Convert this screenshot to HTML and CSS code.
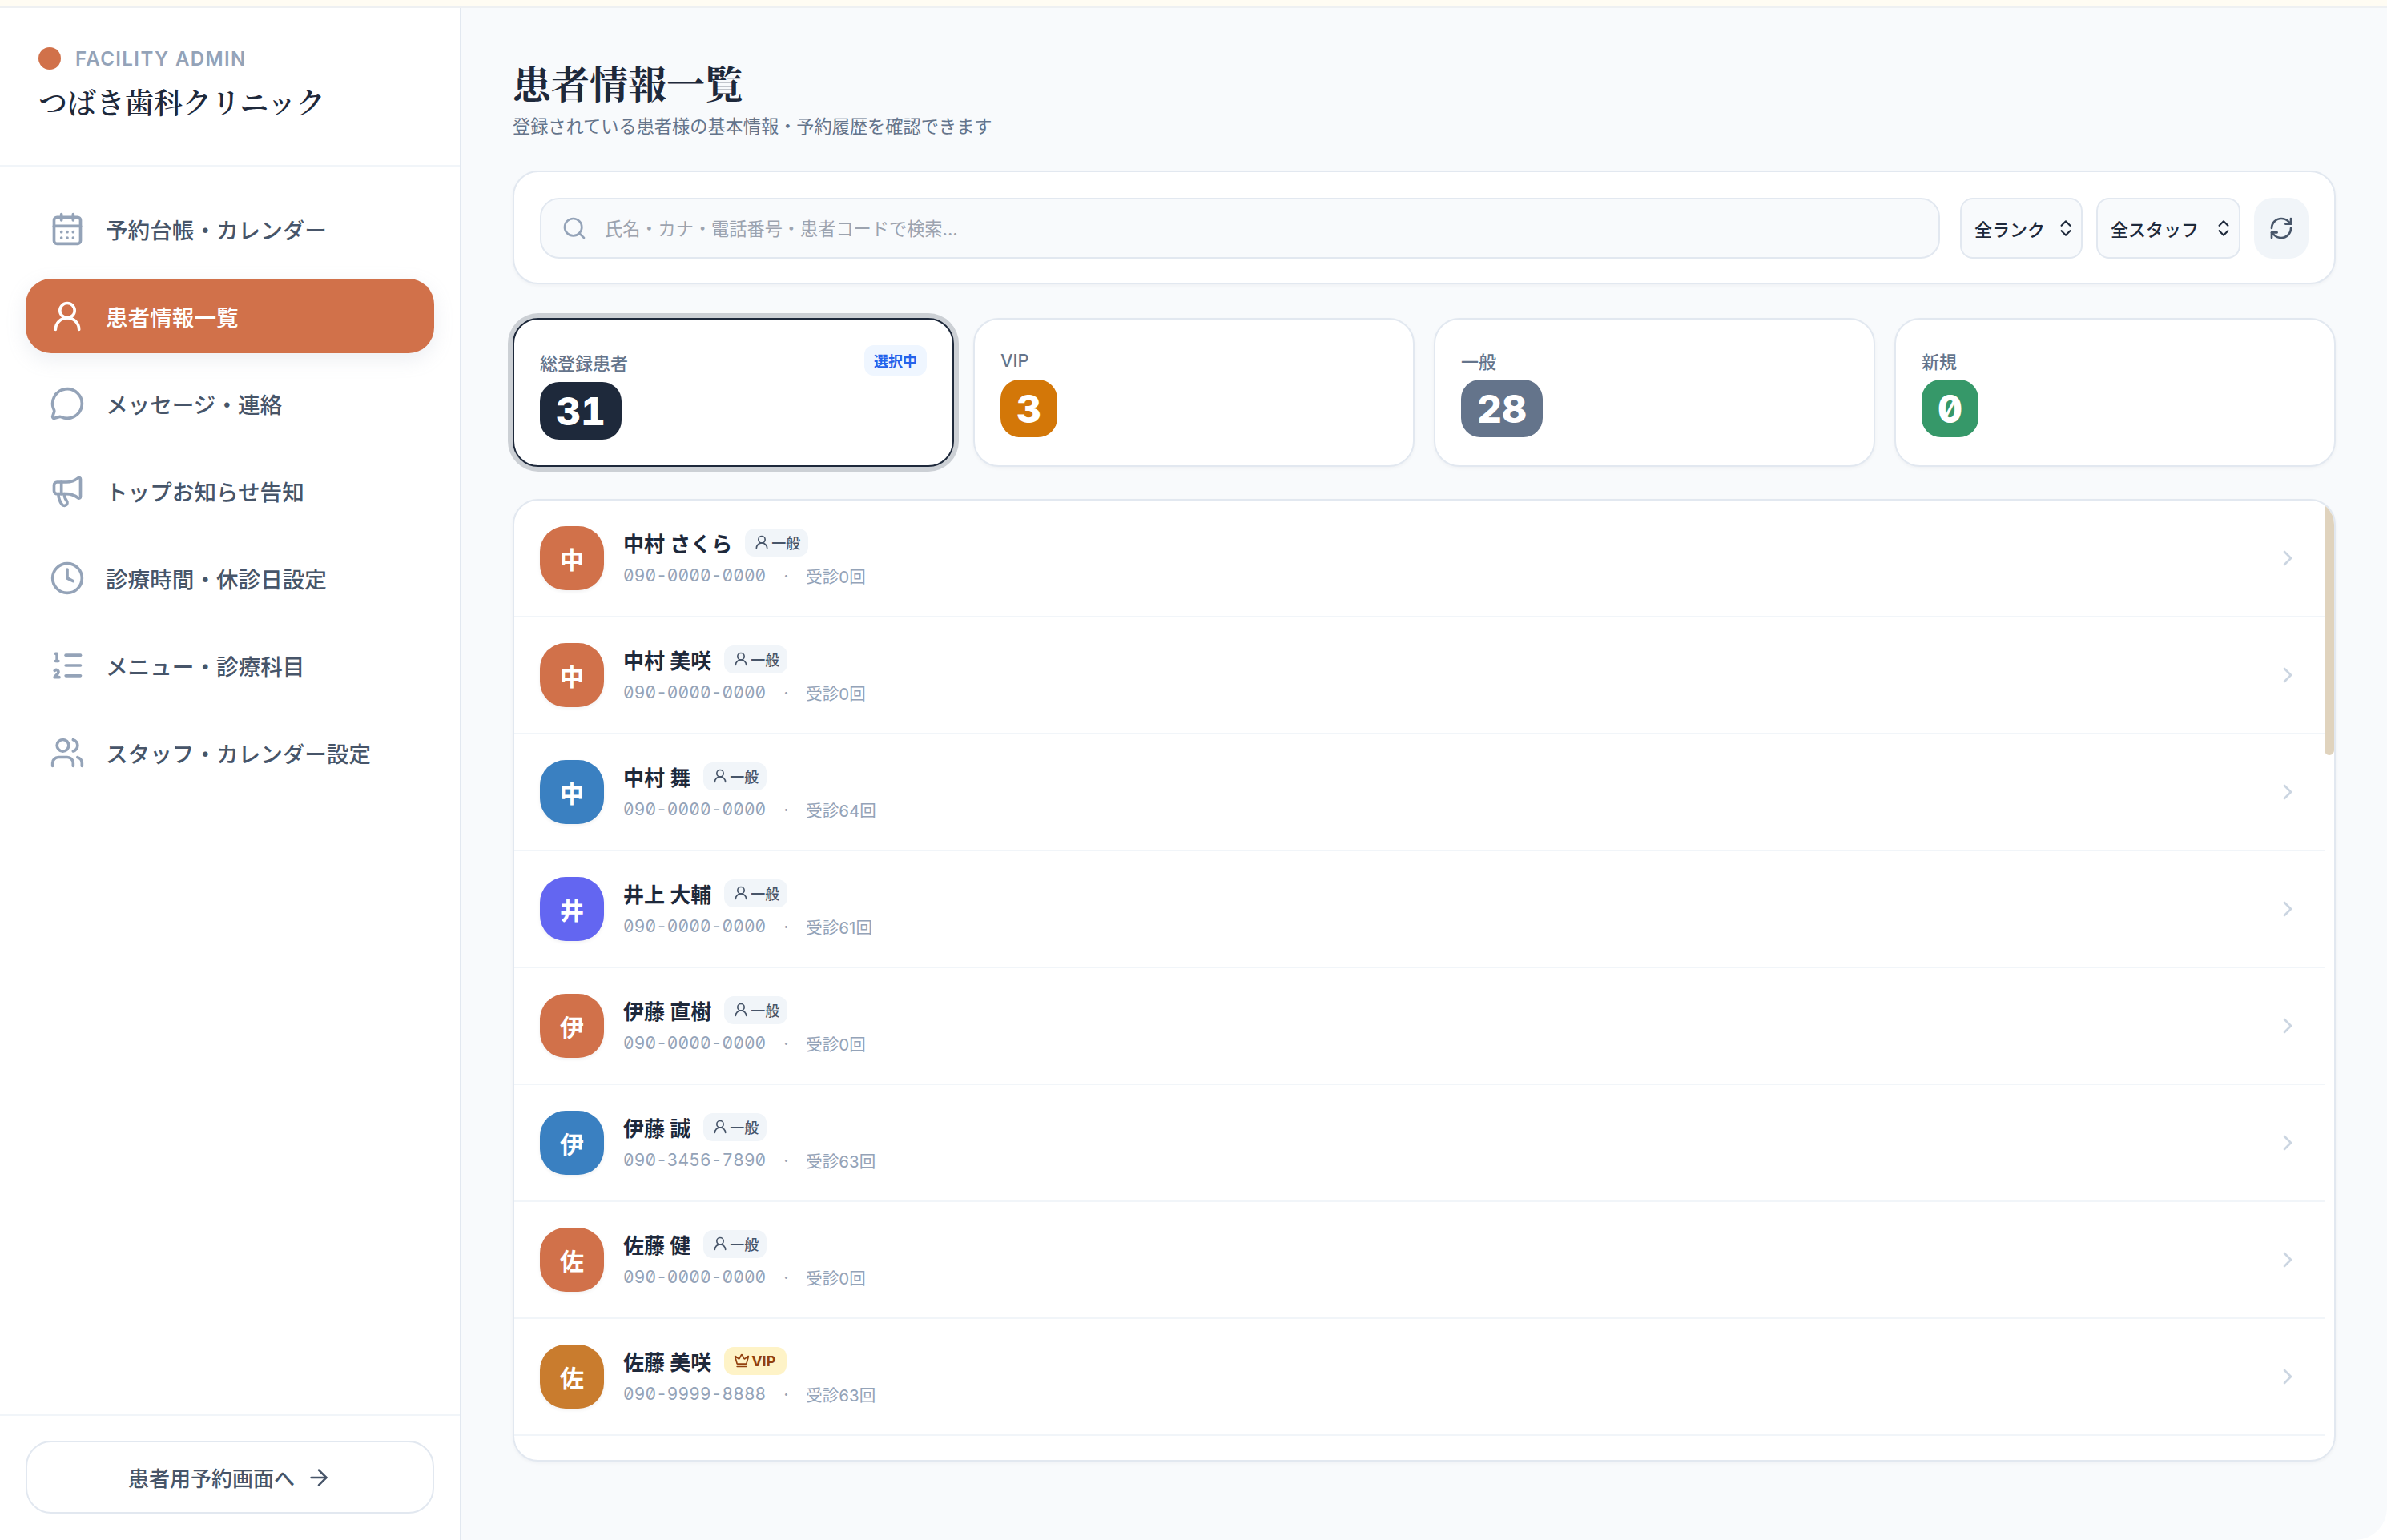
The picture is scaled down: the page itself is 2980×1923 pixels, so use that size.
FILE: index.html
```html
<!DOCTYPE html>
<html lang="ja">
<head>
<meta charset="utf-8">
<title>患者情報一覧</title>
<link rel="stylesheet" href="styles.css">
</head>
<body>
<svg class="sprite" aria-hidden="true">
  <symbol id="i-calendar" viewBox="0 0 24 24"><path d="M8 2v4"/><path d="M16 2v4"/><rect width="18" height="18" x="3" y="4" rx="2"/><path d="M3 10h18"/><path d="M8 14h.01"/><path d="M12 14h.01"/><path d="M16 14h.01"/><path d="M8 18h.01"/><path d="M12 18h.01"/><path d="M16 18h.01"/></symbol>
  <symbol id="i-user" viewBox="0 0 24 24"><circle cx="12" cy="8" r="5"/><path d="M20 21a8 8 0 0 0-16 0"/></symbol>
  <symbol id="i-message" viewBox="0 0 24 24"><path d="M2.992 16.342a2 2 0 0 1 .094 1.167l-1.065 3.29a1 1 0 0 0 1.236 1.168l3.413-.998a2 2 0 0 1 1.099.092 10 10 0 1 0-4.777-4.719"/></symbol>
  <symbol id="i-megaphone" viewBox="0 0 24 24"><path d="M11 6a13 13 0 0 0 8.4-2.8A1 1 0 0 1 21 4v12a1 1 0 0 1-1.6.8A13 13 0 0 0 11 14H5a2 2 0 0 1-2-2V8a2 2 0 0 1 2-2z"/><path d="M6 14a12 12 0 0 0 2.4 7.2 2 2 0 0 0 3.2-2.4A8 8 0 0 1 10 14"/><path d="M8 6v8"/></symbol>
  <symbol id="i-clock" viewBox="0 0 24 24"><circle cx="12" cy="12" r="10"/><path d="M12 6v6l4 2"/></symbol>
  <symbol id="i-list" viewBox="0 0 24 24"><path d="M11 5h10"/><path d="M11 12h10"/><path d="M11 19h10"/><path d="M4 4h1v5"/><path d="M4 9h2"/><path d="M6.5 20H3.4c0-1 2.6-1.925 2.6-3.5a1.5 1.5 0 0 0-2.6-1.02"/></symbol>
  <symbol id="i-users" viewBox="0 0 24 24"><path d="M16 21v-2a4 4 0 0 0-4-4H6a4 4 0 0 0-4 4v2"/><path d="M16 3.128a4 4 0 0 1 0 7.744"/><path d="M22 21v-2a4 4 0 0 0-3-3.87"/><circle cx="9" cy="7" r="4"/></symbol>
  <symbol id="i-arrow" viewBox="0 0 24 24"><path d="M5 12h14"/><path d="m12 5 7 7-7 7"/></symbol>
  <symbol id="i-search" viewBox="0 0 24 24"><circle cx="11" cy="11" r="8"/><path d="m21 21-4.34-4.34"/></symbol>
  <symbol id="i-updown" viewBox="0 0 24 24"><path d="m7 15 5 5 5-5"/><path d="m7 9 5-5 5 5"/></symbol>
  <symbol id="i-refresh" viewBox="0 0 24 24"><path d="M3 12a9 9 0 0 1 9-9 9.75 9.75 0 0 1 6.74 2.74L21 8"/><path d="M21 3v5h-5"/><path d="M21 12a9 9 0 0 1-9 9 9.75 9.75 0 0 1-6.74-2.74L3 16"/><path d="M8 16H3v5"/></symbol>
  <symbol id="i-crown" viewBox="0 0 24 24"><path d="M11.562 3.266a.5.5 0 0 1 .876 0L15.39 8.87a1 1 0 0 0 1.516.294L21.183 5.5a.5.5 0 0 1 .798.519l-2.834 10.246a1 1 0 0 1-.956.734H5.81a1 1 0 0 1-.957-.734L2.02 6.02a.5.5 0 0 1 .798-.519l4.276 3.664a1 1 0 0 0 1.516-.294z"/><path d="M5 21h14"/></symbol>
  <symbol id="i-chevron" viewBox="0 0 24 24"><path d="m9 18 6-6-6-6"/></symbol>
</svg>

<div class="app">
  <div class="topstrip"></div>
  <div class="shell">
    <aside class="sidebar">
      <header class="brand">
        <div class="brand-top"><span class="brand-dot"></span><span class="brand-role">FACILITY ADMIN</span></div>
        <div class="brand-name">つばき歯科クリニック</div>
      </header>
      <nav class="nav">
        <a class="nav-item"><svg class="ico nav-ico"><use href="#i-calendar"/></svg><span>予約台帳・カレンダー</span></a>
        <a class="nav-item active"><svg class="ico nav-ico"><use href="#i-user"/></svg><span>患者情報一覧</span></a>
        <a class="nav-item"><svg class="ico nav-ico"><use href="#i-message"/></svg><span>メッセージ・連絡</span></a>
        <a class="nav-item"><svg class="ico nav-ico"><use href="#i-megaphone"/></svg><span>トップお知らせ告知</span></a>
        <a class="nav-item"><svg class="ico nav-ico"><use href="#i-clock"/></svg><span>診療時間・休診日設定</span></a>
        <a class="nav-item"><svg class="ico nav-ico"><use href="#i-list"/></svg><span>メニュー・診療科目</span></a>
        <a class="nav-item"><svg class="ico nav-ico"><use href="#i-users"/></svg><span>スタッフ・カレンダー設定</span></a>
      </nav>
      <footer class="side-foot">
        <a class="patient-link"><span>患者用予約画面へ</span><svg class="ico arrow-ico"><use href="#i-arrow"/></svg></a>
      </footer>
    </aside>

    <main class="main">
      <h1 class="page-title">患者情報一覧</h1>
      <p class="page-sub">登録されている患者様の基本情報・予約履歴を確認できます</p>

      <section class="toolbar">
        <label class="search">
          <svg class="ico search-ico"><use href="#i-search"/></svg>
          <input class="search-input" type="text" placeholder="氏名・カナ・電話番号・患者コードで検索...">
        </label>
        <div class="select select-rank"><span>全ランク</span><svg class="ico updown"><use href="#i-updown"/></svg></div>
        <div class="select select-staff"><span>全スタッフ</span><svg class="ico updown"><use href="#i-updown"/></svg></div>
        <button class="refresh" type="button" aria-label="更新"><svg class="ico refresh-ico"><use href="#i-refresh"/></svg></button>
      </section>

      <section class="stats">
        <div class="stat selected">
          <div class="stat-head"><span class="stat-label">総登録患者</span><span class="stat-flag">選択中</span></div>
          <div class="stat-num num-dark">31</div>
        </div>
        <div class="stat">
          <div class="stat-head"><span class="stat-label">VIP</span></div>
          <div class="stat-num num-amber">3</div>
        </div>
        <div class="stat">
          <div class="stat-head"><span class="stat-label">一般</span></div>
          <div class="stat-num num-slate">28</div>
        </div>
        <div class="stat">
          <div class="stat-head"><span class="stat-label">新規</span></div>
          <div class="stat-num num-green">0</div>
        </div>
      </section>

      <section class="list">
        <div class="rows">
          <div class="row"><div class="avatar av-orange">中</div><div class="row-body"><div class="row-top"><span class="row-name">中村 さくら</span><span class="rank"><svg class="ico rank-ico"><use href="#i-user"/></svg>一般</span></div><div class="row-meta"><span class="phone">090-0000-0000</span><span class="sep">·</span><span>受診0回</span></div></div><svg class="ico chev"><use href="#i-chevron"/></svg></div>
          <div class="row"><div class="avatar av-orange">中</div><div class="row-body"><div class="row-top"><span class="row-name">中村 美咲</span><span class="rank"><svg class="ico rank-ico"><use href="#i-user"/></svg>一般</span></div><div class="row-meta"><span class="phone">090-0000-0000</span><span class="sep">·</span><span>受診0回</span></div></div><svg class="ico chev"><use href="#i-chevron"/></svg></div>
          <div class="row"><div class="avatar av-blue">中</div><div class="row-body"><div class="row-top"><span class="row-name">中村 舞</span><span class="rank"><svg class="ico rank-ico"><use href="#i-user"/></svg>一般</span></div><div class="row-meta"><span class="phone">090-0000-0000</span><span class="sep">·</span><span>受診64回</span></div></div><svg class="ico chev"><use href="#i-chevron"/></svg></div>
          <div class="row"><div class="avatar av-indigo">井</div><div class="row-body"><div class="row-top"><span class="row-name">井上 大輔</span><span class="rank"><svg class="ico rank-ico"><use href="#i-user"/></svg>一般</span></div><div class="row-meta"><span class="phone">090-0000-0000</span><span class="sep">·</span><span>受診61回</span></div></div><svg class="ico chev"><use href="#i-chevron"/></svg></div>
          <div class="row"><div class="avatar av-orange">伊</div><div class="row-body"><div class="row-top"><span class="row-name">伊藤 直樹</span><span class="rank"><svg class="ico rank-ico"><use href="#i-user"/></svg>一般</span></div><div class="row-meta"><span class="phone">090-0000-0000</span><span class="sep">·</span><span>受診0回</span></div></div><svg class="ico chev"><use href="#i-chevron"/></svg></div>
          <div class="row"><div class="avatar av-blue">伊</div><div class="row-body"><div class="row-top"><span class="row-name">伊藤 誠</span><span class="rank"><svg class="ico rank-ico"><use href="#i-user"/></svg>一般</span></div><div class="row-meta"><span class="phone">090-3456-7890</span><span class="sep">·</span><span>受診63回</span></div></div><svg class="ico chev"><use href="#i-chevron"/></svg></div>
          <div class="row"><div class="avatar av-orange">佐</div><div class="row-body"><div class="row-top"><span class="row-name">佐藤 健</span><span class="rank"><svg class="ico rank-ico"><use href="#i-user"/></svg>一般</span></div><div class="row-meta"><span class="phone">090-0000-0000</span><span class="sep">·</span><span>受診0回</span></div></div><svg class="ico chev"><use href="#i-chevron"/></svg></div>
          <div class="row"><div class="avatar av-amber">佐</div><div class="row-body"><div class="row-top"><span class="row-name">佐藤 美咲</span><span class="rank rank-vip"><svg class="ico rank-ico"><use href="#i-crown"/></svg>VIP</span></div><div class="row-meta"><span class="phone">090-9999-8888</span><span class="sep">·</span><span>受診63回</span></div></div><svg class="ico chev"><use href="#i-chevron"/></svg></div>
        </div>
        <div class="scroll-track"><div class="scroll-thumb"></div></div>
      </section>
    </main>
  </div>
</div>
</body>
</html>
```

FILE: styles.css
```css
* { box-sizing: border-box; }
html, body { margin: 0; padding: 0; background: #fff; }
body {
  width: 2980px;
  height: 1923px;
  overflow: hidden;
  font-family: "Inter", "Noto Sans CJK JP", sans-serif;
  color: #1e293b;
}
.sprite { position: absolute; width: 0; height: 0; overflow: hidden; }
.ico {
  fill: none;
  stroke: currentColor;
  stroke-width: 2;
  stroke-linecap: round;
  stroke-linejoin: round;
  flex: none;
  display: block;
}

.app { display: flex; flex-direction: column; height: 1923px; }
.topstrip { height: 10px; background: #fffcf3; border-bottom: 2px solid #eef0f2; flex: none; }
.shell { flex: 1; display: flex; min-height: 0; }

/* sidebar */
.sidebar {
  width: 576px;
  flex: none;
  display: flex;
  flex-direction: column;
  background: #fff;
  border-right: 2px solid #e2e8f0;
}
.brand { height: 198px; padding: 46px 48px 0; border-bottom: 2px solid #f1f5f9; flex: none; }
.brand-top { display: flex; align-items: center; gap: 18px; height: 34px; }
.brand-dot { width: 28px; height: 28px; border-radius: 50%; background: #d1714a; flex: none; }
.brand-role { margin-top: 2px; font-size: 24px; font-weight: 600; color: #94a3b8; letter-spacing: 1.4px; line-height: 34px; }
.brand-name {
  margin-top: 10px;
  font-family: "Noto Serif CJK JP", "Source Han Serif", "Noto Sans CJK JP", serif;
  font-size: 36px;
  font-weight: 600;
  line-height: 54px;
  color: #1e293b;
}
.nav { flex: 1; display: flex; flex-direction: column; gap: 16px; padding: 31px 32px 0; }
.nav-item {
  height: 93px;
  display: flex;
  align-items: center;
  gap: 26px;
  padding-left: 30px;
  border-radius: 32px;
  color: #475569;
  font-size: 27.6px;
  font-weight: 500;
}
.nav-ico { width: 44px; height: 44px; color: #94a3b8; }
.nav-item.active { background: #d1714a; color: #fff; box-shadow: 0 8px 24px rgba(148, 163, 184, .18); }
.nav-item.active .nav-ico { color: #fff; }
.side-foot { padding: 31px 32px 33px; border-top: 2px solid #f1f5f9; flex: none; }
.patient-link {
  height: 91px;
  display: flex;
  align-items: center;
  justify-content: center;
  gap: 14px;
  border: 2px solid #e2e8f0;
  border-radius: 32px;
  color: #475569;
  font-size: 26px;
  font-weight: 500;
}
.arrow-ico { width: 32px; height: 32px; }

/* main */
.main {
  flex: 1;
  min-width: 0;
  display: flex;
  flex-direction: column;
  padding: 64px 64px 98px;
  background: #f8fafc;
  border-bottom-right-radius: 40px;
}
.page-title {
  margin: 0;
  font-family: "Noto Serif CJK JP", "Source Han Serif", "Noto Sans CJK JP", serif;
  font-size: 48px;
  font-weight: 700;
  line-height: 58px;
  color: #1e293b;
}
.page-sub { margin: 10px 0 39px; font-size: 22.2px; line-height: 32px; color: #64748b; }

.toolbar {
  flex: none;
  display: flex;
  align-items: center;
  padding: 32px 32px 30px;
  background: #fff;
  border: 2px solid #e2e8f0;
  border-radius: 32px;
  box-shadow: 0 2px 4px rgba(15, 23, 42, .04);
}
.search {
  flex: 1;
  height: 76px;
  display: flex;
  align-items: center;
  gap: 22px;
  padding-left: 24px;
  margin-right: 25px;
  background: #f8fafc;
  border: 2px solid #e2e8f0;
  border-radius: 24px;
}
.search-ico { width: 32px; height: 32px; margin-left: 1px; color: #94a3b8; }
.search-input {
  flex: 1;
  min-width: 0;
  border: 0;
  outline: 0;
  padding: 0;
  background: transparent;
  font-family: inherit;
  font-size: 22.2px;
  color: #1e293b;
}
.search-input::placeholder { color: #9ca3af; opacity: 1; }
.select {
  height: 76px;
  display: flex;
  align-items: center;
  justify-content: space-between;
  padding: 0 6px 0 16px;
  margin-right: 17px;
  background: #f8fafc;
  border: 2px solid #e2e8f0;
  border-radius: 16px;
  font-size: 22px;
  font-weight: 500;
  color: #1e293b;
}
.select-rank { width: 153px; }
.select-staff { width: 180px; }
.updown { width: 26px; height: 26px; }
.refresh {
  width: 68px;
  height: 76px;
  padding: 0;
  display: flex;
  align-items: center;
  justify-content: center;
  background: #f1f5f9;
  border: 0;
  border-radius: 24px;
  color: #475569;
}
.refresh-ico { width: 32px; height: 32px; }

.stats {
  flex: none;
  display: grid;
  grid-template-columns: repeat(4, 1fr);
  gap: 24px;
  margin-top: 42px;
}
.stat {
  padding: 32px;
  background: #fff;
  border: 2px solid #e2e8f0;
  border-radius: 32px;
  box-shadow: 0 2px 4px rgba(15, 23, 42, .04);
}
.stat.selected { border-color: #1e293b; box-shadow: 0 0 0 6px rgba(30, 41, 59, .2); }
.stat-head { display: flex; align-items: center; justify-content: space-between; min-height: 35px; margin-bottom: 8px; }
.stat-label { margin-top: 3px; font-size: 22px; font-weight: 500; color: #64748b; }
.stat-flag {
  height: 38px;
  padding: 0 12px;
  display: flex;
  align-items: center;
  background: #eff6ff;
  border-radius: 12px;
  font-size: 18px;
  font-weight: 600;
  color: #2563eb;
}
.stat-num {
  width: fit-content;
  height: 72px;
  padding: 0 20px;
  display: flex;
  align-items: center;
  border-radius: 24px;
  color: #fff;
  font-size: 48px;
  font-weight: 800;
  font-feature-settings: "tnum" 1, "zero" 1;
}
.num-dark { background: #1e293b; }
.num-amber { background: #d37708; }
.num-slate { background: #64748b; }
.num-green { background: #369869; }

/* list */
.list {
  flex: 1;
  min-height: 0;
  display: flex;
  background: #fff;
  border: 2px solid #e2e8f0;
  border-radius: 32px;
  margin-top: 40px;
  overflow: hidden;
  box-shadow: 0 2px 4px rgba(15, 23, 42, .04);
}
.rows { flex: 1; min-width: 0; }
.row {
  height: 146px;
  display: flex;
  align-items: center;
  gap: 24px;
  padding: 0 30px 0 32px;
  border-bottom: 2px solid #f1f5f9;
}
.avatar {
  width: 80px;
  height: 80px;
  flex: none;
  display: flex;
  align-items: center;
  justify-content: center;
  border-radius: 32px;
  color: #fff;
  font-size: 30px;
  font-weight: 700;
  box-shadow: 0 2px 4px rgba(15, 23, 42, .06);
}
.av-orange { background: #d1714a; }
.av-blue { background: #3a80c1; }
.av-indigo { background: #6366f1; }
.av-amber { background: #c97c2e; }
.row-body { flex: 1; min-width: 0; }
.row-top { display: flex; align-items: center; gap: 16px; height: 35px; }
.row-name { font-size: 26px; font-weight: 700; color: #1e293b; }
.rank {
  height: 35px;
  padding: 0 10px 0 11px;
  display: flex;
  align-items: center;
  gap: 2px;
  background: #f1f5f9;
  border-radius: 12px;
  font-size: 18px;
  font-weight: 500;
  color: #475569;
}
.rank-ico { width: 20px; height: 20px; }
.rank-vip { padding: 0 14px 0 12px; background: #fef3c7; color: #92400e; font-weight: 700; }
.row-meta { display: flex; align-items: center; margin-top: 8px; font-size: 20.5px; color: #94a3b8; height: 32px; }
.phone { font-size: 21px; letter-spacing: .1px; font-feature-settings: "tnum" 1, "zero" 1; }
.sep { width: 50px; text-align: center; font-size: 22px; }
.chev { width: 32px; height: 32px; color: #cbd5e1; }
.scroll-track { width: 12px; flex: none; }
.scroll-thumb { height: 318px; background: #e0d3bd; border-radius: 0 0 6px 6px; }
```
